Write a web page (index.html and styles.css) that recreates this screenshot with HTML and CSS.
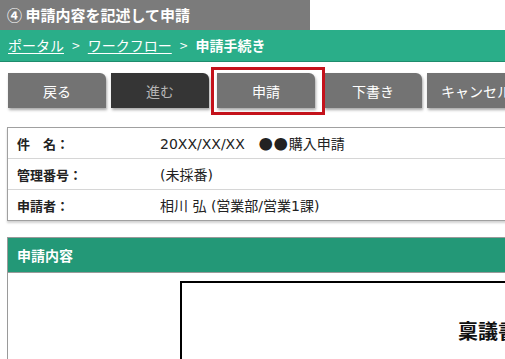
FILE: index.html
```html
<!DOCTYPE html>
<html lang="ja">
<head>
<meta charset="utf-8">
<link rel="stylesheet" href="styles.css">
</head>
<body>
<div class="page">
  <div class="title">④ 申請内容を記述して申請</div>
  <div class="crumbs">
    <a class="crumb-link">ポータル</a><span class="sep">&gt;</span><a class="crumb-link">ワークフロー</a><span class="sep">&gt;</span><span class="current">申請手続き</span>
  </div>
  <div class="toolbar">
    <button class="btn">戻る</button>
    <button class="btn btn-dark">進む</button>
    <div class="highlight-wrap">
      <button class="btn">申請</button>
      <div class="highlight"></div>
    </div>
    <button class="btn">下書き</button>
    <button class="btn">キャンセル</button>
  </div>
  <div class="info">
    <div class="row"><div class="label">件　名：</div><div class="value">20XX/XX/XX　<span class="dots">●●</span>購入申請</div></div>
    <div class="row"><div class="label">管理番号：</div><div class="value">(未採番)</div></div>
    <div class="row"><div class="label">申請者：</div><div class="value">相川 弘 (営業部/営業1課)</div></div>
  </div>
  <div class="section">
    <div class="section-head">申請内容</div>
    <div class="section-body">
      <div class="doc">
        <div class="doc-title">稟議書</div>
      </div>
    </div>
  </div>
</div>
</body>
</html>
```
FILE: styles.css
```css
html, body {
  margin: 0;
  padding: 0;
  background: #ffffff;
  overflow: hidden;
  width: 505px;
  height: 359px;
}
.page {
  font-family: "Noto Sans CJK JP", "Noto Sans", sans-serif;
  width: 600px;
}
.title {
  width: 303px;
  height: 30px;
  background: #7b7b7b;
  color: #fff;
  font-weight: bold;
  font-size: 15px;
  line-height: 30px;
  padding-left: 7px;
}
.crumbs {
  height: 31px;
  background: #2aae89;
  border-bottom: 1px solid #1f8c6d;
  color: #fff;
  font-size: 14px;
  line-height: 31px;
  padding-left: 8px;
  display: flex;
  align-items: center;
}
.crumb-link {
  color: #fff;
  text-decoration: underline;
  text-underline-offset: 2px;
}
.sep {
  margin: 0 8px;
}
.current {
  font-weight: bold;
}
.toolbar {
  display: flex;
  gap: 5px;
  padding: 11px 0 0 8px;
  height: 35px;
}
.btn {
  width: 98px;
  height: 35px;
  flex: none;
  border: none;
  border-radius: 0 6px 0 0;
  background: #737373;
  color: #fff;
  font-family: "Noto Sans CJK JP", sans-serif;
  font-size: 14px;
  box-shadow: 1px 2px 3px rgba(0,0,0,0.35);
  padding: 0;
}
.btn-dark {
  background: #353535;
  color: #b5b5b5;
}
.highlight-wrap {
  position: relative;
  margin: 0 4px 0 3px;
}
.highlight {
  position: absolute;
  left: -6px;
  top: -6px;
  width: 108px;
  height: 42px;
  border: 3px solid #c4121b;
}
.info {
  margin: 19px 0 0 7px;
  width: 560px;
  border: 1px solid #a0a0a0;
  box-shadow: 0 2px 2px rgba(0,0,0,0.18);
  font-size: 13px;
  color: #222;
}
.row {
  display: flex;
  height: 30px;
  align-items: center;
  border-top: 1px solid #d6d6d6;
}
.row:first-child {
  border-top: none;
}
.label {
  width: 143px;
  padding-left: 9px;
  font-weight: bold;
}
.value {
  flex: 1;
  font-size: 14px;
  font-family: "DejaVu Sans", "Noto Sans CJK JP", sans-serif;
}
.dots {
  font-family: "Noto Sans CJK JP", sans-serif;
  letter-spacing: 1px;
}
.section {
  margin: 16px 0 0 7px;
  width: 560px;
  border: 1px solid #9a9a9a;
}
.section-head {
  height: 34px;
  background: #239877;
  border-bottom: 1px solid #9a9a9a;
  color: #fff;
  font-weight: bold;
  font-size: 14px;
  line-height: 34px;
  padding-left: 9px;
}
.section-body {
  height: 120px;
  padding: 8px 0 0 172px;
}
.doc {
  border: 2px solid #000;
  border-right: none;
  height: 200px;
}
.doc-title {
  font-size: 20px;
  font-weight: bold;
  color: #111;
  padding: 34px 0 0 276px;
  line-height: 28px;
}
```
